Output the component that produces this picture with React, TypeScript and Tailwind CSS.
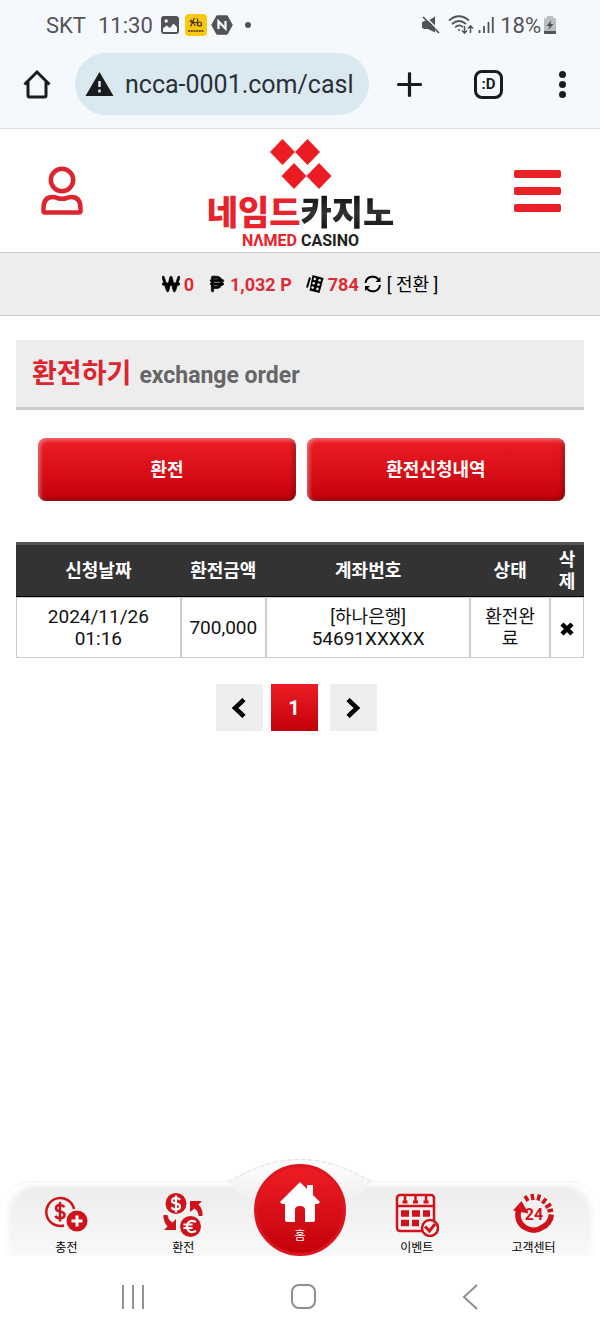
import { FaPesoSign, FaWonSign } from "react-icons/fa6";

const RED = "#d0121b";

function StatusBar() {
    return (
        <div className="h-[50px] pl-[46px] pr-11 flex items-center justify-between text-[22px] text-[#515358]">
            <div className="flex items-center">
                <span className="mr-3">SKT</span>
                <span className="mr-2">11:30</span>
                <svg width="18" height="18" viewBox="0 0 18 18" className="mr-[6px]">
                    <rect width="18" height="18" rx="3" fill="#515358" />
                    <path d="M2 12.5 5.5 9.5 9 12 12.5 7.5 16 11v5H2Z" fill="#f5f8fd" />
                    <circle cx="5.2" cy="5" r="1.7" fill="#f5f8fd" />
                </svg>
                <svg width="22" height="22" viewBox="0 0 22 22" className="mr-1">
                    <rect width="22" height="22" rx="4" fill="#fbc70f" />
                    <path d="M4.500 7.500 12.500 9M9.500 4 5.500 12.500M5.500 5.500 10.500 12M12.500 4.500v6.500" stroke="#403008" strokeWidth="1.200" fill="none" />
                    <circle cx="14.500" cy="10" r="2" stroke="#403008" strokeWidth="1.200" fill="none" />
                    <path d="M3 17h16" stroke="#403008" strokeWidth="1.300" strokeDasharray="2 .7" />
                </svg>
                <svg width="22" height="20" viewBox="0 0 22 20" className="mr-3">
                    <path d="M6 1h10l5 9-5 9H6l-5-9Z" fill="#515358" stroke="#515358" strokeWidth="1.500" strokeLinejoin="round" />
                    <path d="M7.500 14V6.500l7 7V6" stroke="#fff" strokeWidth="2.200" fill="none" />
                </svg>
                <span className="size-[6px] rounded-full bg-[#515358]" />
            </div>
            <div className="flex items-center">
                <svg width="18" height="18" viewBox="0 0 18 18" className="mr-2">
                    <path d="M0 6.500 2 5h4l7-4.500v16L6 13H2L0 11.500Z" fill="#515358" />
                    <path d="M3.500 1 18 15.500" stroke="#f5f8fd" strokeWidth="1.500" />
                    <path d="M1 1 17 17" stroke="#515358" strokeWidth="1.700" />
                </svg>
                <svg width="26" height="20" viewBox="0 0 26 20" className="mr-1" fill="none" stroke="#515358" strokeWidth="1.700">
                    <path d="M1 5.500Q11-3 21 5.500M4 9Q11 3 18 9M7 12.500Q11 8.500 15 12" />
                    <circle cx="11" cy="15" r="1" fill="#515358" stroke="none" />
                    <path d="M16.500 11v7m-2.500-2.500 2.500 2.700 2.500-2.700M22.500 18v-7m-2.500 2.500 2.500-2.700 2.500 2.700" strokeWidth="1.500" />
                </svg>
                <svg width="16" height="16" viewBox="0 0 16 16" className="mr-[6px]" stroke="#515358" strokeWidth="1.800">
                    <path d="M1.500 13v3M6 9v7M10.500 5v11M14.800 0v16" />
                </svg>
                <span className="mr-[3px]">18%</span>
                <svg width="12" height="18" viewBox="0 0 12 18">
                    <path d="M3 0h6v2h2q1 0 1 1v14q0 1-1 1H1q-1 0-1-1V3q0-1 1-1h2Z" fill="#babdc2" />
                    <path d="M0 15h12v2q0 1-1 1H1q-1 0-1-1ZM7.500 4 2.500 10h3L4.500 14l5-6h-3Z" fill="#515358" />
                </svg>
            </div>
        </div>
    );
}

function BrowserBar() {
    return (
        <div className="h-[79px] pb-[10px] border-b border-[#d9dce0] pl-[22px] pr-[34px] flex items-center">
            <button aria-label="Home page">
                <svg width="30" height="30" viewBox="0 0 30 30" fill="none" stroke="#191c1f" strokeWidth="3">
                    <path d="M2.500 15.500 15 3l12.500 12.500M6 13v13.500q0 1.500 1.500 1.500h15q1.500 0 1.500-1.500V13" />
                </svg>
            </button>
            <div className="ml-[23px] mr-[26px] flex-1 min-w-0 h-[62px] rounded-full bg-[#dae8f0] pl-[10px] pr-2 flex items-center">
                <svg width="29" height="26" viewBox="0 0 29 26" className="shrink-0 mr-[11px]">
                    <path d="M14.500 1 28.500 25H.5Z" fill="#191c1f" />
                    <path d="M14.500 10v6M14.500 18.500v3" stroke="#dae8f0" strokeWidth="2.500" />
                </svg>
                <input
                    type="text"
                    aria-label="Address"
                    defaultValue="ncca-0001.com/casl"
                    className="flex-1 min-w-0 pt-[2px] bg-transparent text-[25px] text-[#2a3036] focus:outline-none"
                />
            </div>
            <button aria-label="New tab" className="mr-[50px]">
                <svg width="29" height="29" viewBox="0 0 29 29" stroke="#191c1f" strokeWidth="3.200" strokeLinecap="round">
                    <path d="M14.500 3.500v22M3.500 14.500h22" />
                </svg>
            </button>
            <button aria-label="Tabs" className="mr-14 size-[29px] rounded-lg border-3 border-[#191c1f] text-[15px] leading-none font-bold text-[#191c1f]">
                :D
            </button>
            <button aria-label="More" className="py-1 flex flex-col gap-[3px]">
                <span className="size-[7px] rounded-full bg-[#191c1f]" />
                <span className="size-[7px] rounded-full bg-[#191c1f]" />
                <span className="size-[7px] rounded-full bg-[#191c1f]" />
            </button>
        </div>
    );
}

function SiteHeader() {
    return (
        <header className="h-[123px] px-[39px] flex items-center justify-between">
            <button aria-label="My page">
                <svg width="48" height="50" viewBox="0 0 48 50" fill="none" stroke="#dd2530" strokeWidth="4.500">
                    <circle cx="23" cy="14" r="11.200" />
                    <path d="M4.500 45V42Q4.500 31 14 31q2 0 4 1 5 1.500 10 0 2-1 4-1 9.500 0 9.500 11v3q0 1.500-1.500 1.500H6q-1.500 0-1.500-1.500Z" />
                </svg>
            </button>
            <a href="#" className="pt-[6px] flex flex-col items-center">
                <svg width="64" height="50" viewBox="0 0 64 50" fill="#ed1c24">
                    <path d="M13.500 0 26 13 13.500 26 1 13ZM38.500 0 51 13 38.500 26 26 13ZM25 24l12.500 13L25 50 12.500 37ZM50 24l12.500 13L50 50 37.500 37Z" />
                </svg>
                <span className="mt-[6px] flex text-[34px] leading-[36px] font-black whitespace-nowrap">
                    <span className="text-[#e9222b]">네임드</span>
                    <span className="bg-linear-to-b from-[#111] via-[#333] to-[#111] bg-clip-text text-transparent">카지노</span>
                </span>
                <span className="mt-[2px] flex gap-1 text-[16px] leading-[16px] font-bold text-[#222]">
                    <span className="text-[#e9222b]">NΛMED</span>
                    <span>CASINO</span>
                </span>
            </a>
            <button aria-label="Menu" className="flex flex-col gap-[9px]">
                <span className="w-[47px] h-2 rounded-xs bg-[#ea2027]" />
                <span className="w-[47px] h-2 rounded-xs bg-[#ea2027]" />
                <span className="w-[47px] h-2 rounded-xs bg-[#ea2027]" />
            </button>
        </header>
    );
}

function Balance() {
    return (
        <div className="h-16 border-y border-[#c8c8c8] bg-[#ededed] flex items-center justify-center text-[18px] font-bold text-[#dd2c35]">
            <FaWonSign className="mr-1 text-black stroke-black stroke-20" />
            <span className="mr-[14px]">0</span>
            <FaPesoSign className="mr-1 text-black stroke-black stroke-20" />
            <span className="mr-[14px]">1,032 P</span>
            <svg width="18" height="18" viewBox="0 0 18 18" className="mr-1">
                <path d="M6.500 0 17.500 3 13.500 18 3.500 15.500Z" fill="#000" />
                <path d="M4 2.500 1 12.500" stroke="#000" strokeWidth="2" />
                <g fill="#ededed">
                    <circle cx="8.800" cy="4" r="1.300" />
                    <circle cx="13.600" cy="5.300" r="1.300" />
                    <circle cx="7.700" cy="8.300" r="1.300" />
                    <circle cx="12.500" cy="9.600" r="1.300" />
                    <circle cx="6.600" cy="12.600" r="1.300" />
                    <circle cx="11.400" cy="13.900" r="1.300" />
                </g>
            </svg>
            <span className="mr-1">784</span>
            <button className="flex items-center font-normal text-black">
                <svg width="20" height="18" viewBox="0 0 20 18" className="mr-1" fill="none" stroke="#000" strokeWidth="2">
                    <path d="M2.500 8A7.200 7.200 0 0 1 16 5.500M17 10A7.200 7.200 0 0 1 3.500 12.500" />
                    <path d="M17.500 2v5h-5ZM2 16v-5h5Z" fill="#000" stroke="none" />
                </svg>
                [ 전환 ]
            </button>
        </div>
    );
}

const rows = [
    { date: "2024/11/26 01:16", amount: "700,000", bank: "[하나은행]", account: "54691XXXXX", status: "환전완료" },
];

function OrderTable() {
    return (
        <table className="mt-[41px] w-full table-fixed border-separate border-spacing-0 text-center text-[18px] leading-[22px]">
            <thead>
                <tr className="h-[55px] bg-[#333] text-white">
                    <th className="w-[29%] border-t-3 border-b border-t-[#555] border-b-black">신청날짜</th>
                    <th className="w-[15%] border-t-3 border-b border-t-[#555] border-b-black">환전금액</th>
                    <th className="w-[36%] border-t-3 border-b border-t-[#555] border-b-black">계좌번호</th>
                    <th className="border-t-3 border-b border-t-[#555] border-b-black">상태</th>
                    <th className="w-[6%] px-[6px] border-t-3 border-b border-t-[#555] border-b-black break-all">삭제</th>
                </tr>
            </thead>
            <tbody>
                {rows.map((row) => (
                    <tr key={row.date} className="h-[61px] text-[#111]">
                        <td className="border border-[#ccc] px-7 text-[19px]">{row.date}</td>
                        <td className="border border-[#ccc] text-[19px]">{row.amount}</td>
                        <td className="border border-[#ccc]">
                            {row.bank}
                            <br />
                            <span className="text-[19px]">{row.account}</span>
                        </td>
                        <td className="border border-[#ccc] px-3 break-all">{row.status}</td>
                        <td className="border border-[#ccc]">
                            <button aria-label="삭제" className="align-middle">
                                <svg width="14" height="14" viewBox="0 0 14 14" stroke="#000" strokeWidth="4.500">
                                    <path d="M2 2l10 10M12 2 2 12" />
                                </svg>
                            </button>
                        </td>
                    </tr>
                ))}
            </tbody>
        </table>
    );
}

function Pagination() {
    return (
        <div className="mt-[26px] pr-2 flex justify-center gap-2">
            <button aria-label="Previous" className="size-[47px] bg-[#eee] flex items-center justify-center">
                <svg width="16" height="20" viewBox="0 0 16 20" fill="none" stroke="#000" strokeWidth="4.500">
                    <path d="M13 1.500 4 10l9 8.500" />
                </svg>
            </button>
            <button className="size-[47px] bg-linear-to-b from-[#ed1c24] to-[#c4000a] text-[20px] font-bold text-white">1</button>
            <button aria-label="Next" className="ml-1 size-[47px] bg-[#eee] flex items-center justify-center">
                <svg width="16" height="20" viewBox="0 0 16 20" fill="none" stroke="#000" strokeWidth="4.500">
                    <path d="M3 1.500 12 10l-9 8.500" />
                </svg>
            </button>
        </div>
    );
}

function DepositIcon() {
    return (
        <svg width="44" height="44" viewBox="0 0 44 44" className="shrink-0" fill="none" stroke={RED} strokeWidth="2.500">
            <path d="M30 16A14 14 0 1 0 20 32.500" />
            <path d="M20.500 14Q19 12 16 12q-4 0-4 3.300 0 2.500 4 3.200 4.500.8 4.500 3.500 0 3.200-4.500 3.200-3.500 0-4.500-2.500M16 9v19.500" />
            <circle cx="33" cy="28" r="10.500" fill={RED} stroke="none" />
            <path d="M33 22.500v11M27.500 28h11" stroke="#fff" strokeWidth="3" />
        </svg>
    );
}

function ExchangeIcon() {
    return (
        <svg width="44" height="44" viewBox="0 0 44 44" className="shrink-0">
            <circle cx="15" cy="10.500" r="10.500" fill={RED} />
            <circle cx="29.500" cy="33.500" r="10.500" fill={RED} />
            <path d="M19 7Q18 5 15 5q-4 0-4 2.800 0 2.200 4 2.700t4 3q0 3-4 3-3.500 0-4.500-2.200M15 2.500v17M35 29q-8-3.500-9 4.500 1 8 9 4.500M22.500 31.500h9M22.500 35h9" fill="none" stroke="#fff" strokeWidth="2.200" />
            <path d="M29 8h12l-3.500 3.500Q42 16 41.500 23h-4q0-5-4-7.500L29 19ZM2.500 22h4q.5 5 5 7.500l3.500-3.500V37H3l3.500-3.500Q2 28 2.500 22Z" fill={RED} />
        </svg>
    );
}

function EventIcon() {
    return (
        <svg width="44" height="44" viewBox="0 0 44 44" className="shrink-0" fill="none" stroke={RED} strokeWidth="2.500">
            <rect x="2" y="2" width="37" height="36" rx="3" />
            <path d="M2 13h37M10 3v6M20.500 3v6M31 3v6" />
            <path d="M7.500 9h5M18 9h5M28.500 9h5" strokeWidth="3" />
            <path d="M6 20.500h8M17 20.500h8M28 20.500h7M6 30h8M17 30h7" strokeWidth="6.500" />
            <circle cx="35" cy="35" r="8" fill="#f3f3f3" />
            <path d="m30 33.500 4.500 4.500L40 31" strokeWidth="3" />
        </svg>
    );
}

function SupportIcon() {
    return (
        <svg width="44" height="44" viewBox="0 0 44 44" className="shrink-0" fill="none" stroke={RED}>
            <path d="M6.500 17Q4 29 13 34.500T30 34.500Q38 31 39.500 21.500" strokeWidth="5.500" />
            <path d="M1 17.500 9.500 8l7 12.500Z" fill={RED} stroke="none" />
            <path d="m13 3 3 5M20 1l1 6M27.500 1.500 26 7.500M34 5.500 30.500 10.500M39 11l-5.500 3.500M41 17l-5.500 1" strokeWidth="3.500" />
            <text x="22" y="27" textAnchor="middle" fontSize="16" fontWeight="bold" fill={RED} stroke="none">24</text>
        </svg>
    );
}

function NavItem({ label, children }: { label: string; children: React.ReactNode }) {
    return (
        <a href="#" className="flex-1 pt-[11px] flex flex-col items-center text-[12px] leading-[14px] text-black">
            {children}
            <span className="mt-1">{label}</span>
        </a>
    );
}

function BottomNav() {
    return (
        <nav className="relative h-[75px] px-2 flex rounded-t-[32px] border-t border-[#f4f4f4] bg-linear-to-b from-[#ececec] to-[#f9f9f9] shadow-[inset_8px_2px_6px_#fff,inset_-8px_2px_6px_#fff]">
            {/* bump behind the home button */}
            <svg width="148" height="40" viewBox="0 0 148 40" className="absolute left-1/2 -top-[23px] -translate-x-1/2">
                <defs>
                    <linearGradient id="bump" x1="0" y1="0" x2="0" y2="1">
                        <stop offset="0" stopColor="#fff" />
                        <stop offset="1" stopColor="#efefef" />
                    </linearGradient>
                </defs>
                <path d="M2 23Q16 15 28 10 74-9 120 10q12 5 26 13L128 40H20Z" fill="url(#bump)" />
                <path d="M2 23Q16 15 28 10 74-9 120 10q12 5 26 13" fill="none" stroke="#dcdcdc" strokeDasharray="5 2" />
            </svg>
            <NavItem label="충전"><DepositIcon /></NavItem>
            <NavItem label="환전"><ExchangeIcon /></NavItem>
            <div className="relative flex-1 flex justify-center">
                <a href="#" className="-mt-[18px] size-[92px] shrink-0 rounded-full border-3 border-[#dc1620] bg-linear-to-b from-[#ed1c24] to-[#c4000a] flex flex-col items-center pt-[14px] text-[12px] leading-[20px] text-white">
                    <svg width="40" height="41" viewBox="0 0 40 41" className="shrink-0" fill="#fff">
                        <path d="M20 1 27 8V4h6v10l7 7-2 2h-3v16q0 2-2 2h-8V29q0-4-5-4t-5 4v12H7q-2 0-2-2V23H2l-2-2Z" />
                    </svg>
                    <span className="mt-1">홈</span>
                </a>
            </div>
            <NavItem label="이벤트"><EventIcon /></NavItem>
            <NavItem label="고객센터"><SupportIcon /></NavItem>
        </nav>
    );
}

function SystemNav() {
    return (
        <div className="h-[77px] pt-1 px-[118px] flex items-center justify-between">
            <button aria-label="Recent apps" className="ml-1 flex gap-2">
                <span className="w-[2px] h-6 bg-[#929292]" />
                <span className="w-[2px] h-6 bg-[#929292]" />
                <span className="w-[2px] h-6 bg-[#929292]" />
            </button>
            <button aria-label="Home" className="size-[25px] rounded-lg border-2 border-[#8e8e8e]" />
            <button aria-label="Back" className="mr-1">
                <svg width="16" height="26" viewBox="0 0 16 26" fill="none" stroke="#8e8e8e" strokeWidth="2">
                    <path d="M15 1 2 13l13 12" />
                </svg>
            </button>
        </div>
    );
}

export default function App() {
    return (
        <div className="min-h-screen flex flex-col bg-white font-[Roboto,'Noto_Sans_CJK_KR',sans-serif]">
            <div className="bg-[#f5f8fd]">
                <StatusBar />
                <BrowserBar />
            </div>
            <SiteHeader />
            <Balance />
            <main className="flex-1 px-4 pt-6">
                <h1 className="h-[70px] px-4 border-b-3 border-[#ccc] bg-[#ededed] flex items-center gap-2 font-bold">
                    <span className="text-[27px] leading-[36px] text-[#dd2530]">환전하기</span>
                    <span className="pt-1 text-[23px] leading-[36px] text-[#666]">exchange order</span>
                </h1>
                <div className="mt-[28px] pl-[22px] pr-[19px] grid grid-cols-2 gap-[11px] text-[18px] font-bold text-white">
                    <button className="h-[63px] rounded-lg bg-linear-to-b from-[#ed1c24] to-[#c4000a] shadow-[inset_2px_2px_4px_#ffffff66,inset_-2px_-2px_4px_#00000055]">환전</button>
                    <button className="h-[63px] rounded-lg bg-linear-to-b from-[#ed1c24] to-[#c4000a] shadow-[inset_2px_2px_4px_#ffffff66,inset_-2px_-2px_4px_#00000055]">환전신청내역</button>
                </div>
                <OrderTable />
                <Pagination />
            </main>
            <BottomNav />
            <SystemNav />
        </div>
    );
}
